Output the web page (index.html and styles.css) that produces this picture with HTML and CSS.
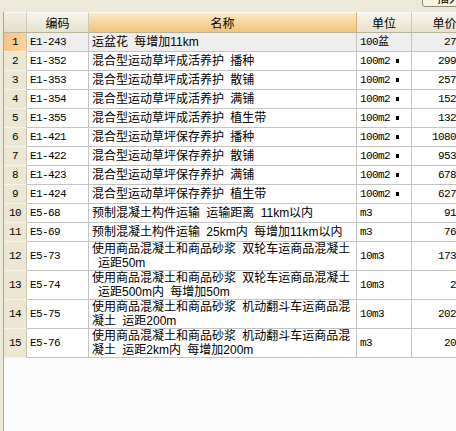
FILE: index.html
```html
<!DOCTYPE html>
<html lang="zh-CN">
<head>
<meta charset="utf-8">
<title>定额列表</title>
<link rel="stylesheet" href="styles.css">
</head>
<body>
<div class="app">
  <div class="toolbar"><button class="btn" type="button">插入</button></div>
  <div class="main">
    <div class="edge"></div>
    <div class="grid">
      <table class="sheet">
        <colgroup>
          <col class="c-no"><col class="c-code"><col class="c-name"><col class="c-unit"><col class="c-price">
        </colgroup>
        <thead>
          <tr>
            <th class="no"></th>
            <th>编码</th>
            <th class="sel">名称</th>
            <th>单位</th>
            <th>单价</th>
          </tr>
        </thead>
        <tbody>
          <tr class="cur"><td class="no">1</td><td class="code">E1-243</td><td class="name">运盆花 每增加11km</td><td class="unit">100盆</td><td class="price">27</td></tr>
          <tr><td class="no">2</td><td class="code">E1-352</td><td class="name">混合型运动草坪成活养护 播种</td><td class="unit">100m2<span class="sq"></span></td><td class="price">299</td></tr>
          <tr><td class="no">3</td><td class="code">E1-353</td><td class="name">混合型运动草坪成活养护 散铺</td><td class="unit">100m2<span class="sq"></span></td><td class="price">257</td></tr>
          <tr><td class="no">4</td><td class="code">E1-354</td><td class="name">混合型运动草坪成活养护 满铺</td><td class="unit">100m2<span class="sq"></span></td><td class="price">152</td></tr>
          <tr><td class="no">5</td><td class="code">E1-355</td><td class="name">混合型运动草坪成活养护 植生带</td><td class="unit">100m2<span class="sq"></span></td><td class="price">132</td></tr>
          <tr><td class="no">6</td><td class="code">E1-421</td><td class="name">混合型运动草坪保存养护 播种</td><td class="unit">100m2<span class="sq"></span></td><td class="price">1080</td></tr>
          <tr><td class="no">7</td><td class="code">E1-422</td><td class="name">混合型运动草坪保存养护 散铺</td><td class="unit">100m2<span class="sq"></span></td><td class="price">953</td></tr>
          <tr><td class="no">8</td><td class="code">E1-423</td><td class="name">混合型运动草坪保存养护 满铺</td><td class="unit">100m2<span class="sq"></span></td><td class="price">678</td></tr>
          <tr><td class="no">9</td><td class="code">E1-424</td><td class="name">混合型运动草坪保存养护 植生带</td><td class="unit">100m2<span class="sq"></span></td><td class="price">627</td></tr>
          <tr><td class="no">10</td><td class="code">E5-68</td><td class="name">预制混凝土构件运输 运输距离 11km以内</td><td class="unit">m3</td><td class="price">91</td></tr>
          <tr><td class="no">11</td><td class="code">E5-69</td><td class="name">预制混凝土构件运输 25km内 每增加11km以内</td><td class="unit">m3</td><td class="price">76</td></tr>
          <tr class="tall"><td class="no">12</td><td class="code">E5-73</td><td class="name">使用商品混凝土和商品砂浆 双轮车运商品混凝土<br><span class="ind">运距50m</span></td><td class="unit">10m3</td><td class="price">173</td></tr>
          <tr class="tall"><td class="no">13</td><td class="code">E5-74</td><td class="name">使用商品混凝土和商品砂浆 双轮车运商品混凝土<br><span class="ind">运距500m内 每增加50m</span></td><td class="unit">10m3</td><td class="price">2</td></tr>
          <tr class="tall"><td class="no">14</td><td class="code">E5-75</td><td class="name">使用商品混凝土和商品砂浆 机动翻斗车运商品混<br>凝土 运距200m</td><td class="unit">10m3</td><td class="price">202</td></tr>
          <tr class="tall"><td class="no">15</td><td class="code">E5-76</td><td class="name">使用商品混凝土和商品砂浆 机动翻斗车运商品混<br>凝土 运距2km内 每增加200m</td><td class="unit">m3</td><td class="price">20</td></tr>
        </tbody>
      </table>
    </div>
  </div>
</div>
</body>
</html>
```

FILE: styles.css
```css
html, body {
  margin: 0;
  padding: 0;
  overflow: hidden;
}

body {
  background: #fbfbfb;
  font-family: "Noto Sans CJK SC", sans-serif;
  font-size: 12px;
  color: #000;
}

.app {
  height: 100vh;
  display: flex;
  flex-direction: column;
}

.toolbar {
  height: 12px;
  flex: none;
  background: #ece9d8;
  display: flex;
  justify-content: flex-end;
  align-items: flex-start;
  overflow: hidden;
}

.btn {
  margin: -12px -16px 0 0;
  width: 50px;
  height: 19px;
  padding: 0 0 0 14px;
  text-align: left;
  background: #f8f5e3;
  border: 1px solid #8c8a70;
  border-radius: 3px;
  font-family: "Noto Sans CJK SC", sans-serif;
  font-size: 12px;
  line-height: 17px;
  color: #000;
}

.main {
  flex: 1;
  display: flex;
  min-height: 0;
}

.edge {
  width: 3px;
  flex: none;
  background: #ece9d8;
  border-right: 1px solid #a8a6a0;
}

.grid {
  flex: 1;
  overflow: hidden;
  background: #fbfbfb;
}

.sheet {
  table-layout: fixed;
  width: 474px;
  border-collapse: separate;
  border-spacing: 0;
}

.c-no { width: 23px; }
.c-code { width: 62px; }
.c-name { width: 268px; }
.c-unit { width: 55px; }
.c-price { width: 66px; }

.sheet th,
.sheet td {
  box-sizing: border-box;
  padding: 0 3px;
  border-right: 1px solid #c4c4c4;
  border-bottom: 1px solid #c4c4c4;
  white-space: nowrap;
  overflow: hidden;
  vertical-align: middle;
  line-height: 12px;
}

.sheet th {
  height: 21px;
  font-weight: normal;
  text-align: center;
  background: linear-gradient(#f7f5ec, #e7e2cd);
  border-top: 1px solid #faf9f4;
  border-right-color: #cfc9b4;
  border-bottom-color: #b9b39c;
}

.sheet th.sel {
  background: linear-gradient(#fbe9c7, #f2c477);
  border-right-color: #d9b074;
}

.sheet th.no {
  background: linear-gradient(#f0ede0, #e5e0ca);
}

.sheet td {
  height: 19px;
  background: #fff;
}

.sheet tr.tall td {
  height: 29px;
  line-height: 14px;
}

.sheet td.no {
  text-align: center;
  background: #ebe7d3;
  border-right-color: #c9c3ab;
  border-bottom-color: #f6f4ea;
  font-family: "Liberation Mono", monospace;
  font-size: 11px;
  letter-spacing: -0.6px;
  padding: 0;
}

.sheet tr.cur td {
  background: #eeeeee;
}

.sheet tr.cur td.no {
  background: linear-gradient(90deg, #f6c385, #fad49e);
}

.code,
.unit {
  font-family: "Liberation Mono", "Noto Sans CJK SC", monospace;
  font-size: 11px;
  letter-spacing: -0.6px;
}

.name {
  font-family: "Liberation Sans", "Noto Sans CJK SC", sans-serif;
  word-spacing: 3px;
}

.ind {
  padding-left: 6px;
}

.price {
  text-align: right;
  padding-right: 21px !important;
  font-family: "Liberation Mono", monospace;
  font-size: 11px;
  letter-spacing: -0.6px;
}

.sq {
  display: inline-block;
  width: 3px;
  height: 4px;
  margin-left: 6px;
  background: #000;
  vertical-align: 1px;
}
```
